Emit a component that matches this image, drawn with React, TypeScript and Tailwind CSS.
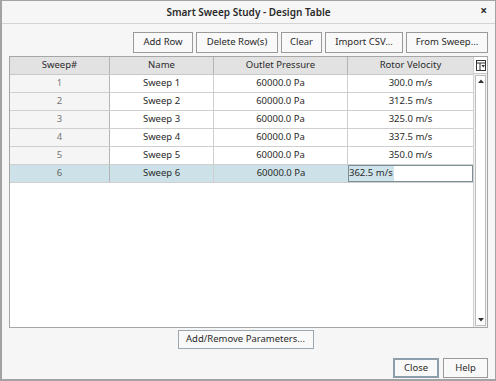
const rows = [
  { id: 1, name: "Sweep 1", p: "60000.0 Pa", v: "300.0 m/s" },
  { id: 2, name: "Sweep 2", p: "60000.0 Pa", v: "312.5 m/s" },
  { id: 3, name: "Sweep 3", p: "60000.0 Pa", v: "325.0 m/s" },
  { id: 4, name: "Sweep 4", p: "60000.0 Pa", v: "337.5 m/s" },
  { id: 5, name: "Sweep 5", p: "60000.0 Pa", v: "350.0 m/s" },
];

function Btn({ label, w }: { label: string; w: string }) {
  return (
    <button className={`${w} h-[21px] border border-[#9a9a9a] bg-[#f9f9f9] text-[9.5px] text-[#2a2a2a] flex items-center justify-center`}>
      {label}
    </button>
  );
}

export default function App() {
  return (
    <div
      className="w-[496px] h-[381px] bg-[#f6f6f6] border-t border-r border-l-2 border-b-2 border-[#a3a3a3] flex flex-col text-[#2a2a2a]"
      style={{ fontFamily: '"Noto Sans", "Open Sans", sans-serif' }}
    >
      {/* title bar */}
      <div className="h-[23px] shrink-0 border-b border-[#d4d4d4] relative flex items-center justify-center">
        <span className="text-[10px] font-semibold">Smart Sweep Study - Design Table</span>
        <span className="absolute right-[8px] top-[4px] text-[12px] font-bold leading-none">×</span>
      </div>

      {/* toolbar */}
      <div className="flex justify-end gap-[3px] pr-[7px] pt-[8px] h-[32px] shrink-0">
        <Btn label="Add Row" w="w-[60px]" />
        <Btn label="Delete Row(s)" w="w-[82px]" />
        <Btn label="Clear" w="w-[41px]" />
        <Btn label="Import CSV..." w="w-[78px]" />
        <Btn label="From Sweep..." w="w-[82px]" />
      </div>

      {/* table */}
      <div className="mx-[7px] h-[272px] shrink-0 border border-[#a6a6a6] bg-white flex text-[9.5px]">
        <div className="flex-1 flex flex-col">
          <div className="h-[18px] flex bg-[#e2e2e2] border-b border-[#c8c8c8]">
            <div className="w-[100px] border-r border-[#b4b4b4] flex items-center justify-center">Sweep#</div>
            <div className="w-[104px] border-r border-[#b4b4b4] flex items-center justify-center">Name</div>
            <div className="w-[134px] border-r border-[#b4b4b4] flex items-center justify-center">Outlet Pressure</div>
            <div className="flex-1 flex items-center justify-center">Rotor Velocity</div>
          </div>
          {rows.map((r) => (
            <div key={r.id} className="h-[18px] flex border-b border-[#cfcfcf]">
              <div className="w-[100px] bg-[#f5f5f5] text-[#777] border-r border-[#b4b4b4] flex items-center justify-center">{r.id}</div>
              <div className="w-[104px] border-r border-[#cfcfcf] flex items-center justify-center">{r.name}</div>
              <div className="w-[134px] border-r border-[#cfcfcf] flex items-center justify-center">{r.p}</div>
              <div className="flex-1 flex items-center justify-center">{r.v}</div>
            </div>
          ))}
          <div className="h-[18px] flex border-b border-[#cfcfcf] bg-[#cde2e8]">
            <div className="w-[100px] text-[#666] border-r border-[#b4b4b4] flex items-center justify-center">6</div>
            <div className="w-[104px] border-r border-[#cfcfcf] flex items-center justify-center">Sweep 6</div>
            <div className="w-[134px] flex items-center justify-center">60000.0 Pa</div>
            <div className="flex-1 bg-white border border-[#7f8f9a] flex items-center">
              <span className="bg-[#cfe3ea] pr-[1px]">362.5 m/s</span>
            </div>
          </div>
        </div>
        {/* scrollbar */}
        <div className="w-[14px] flex flex-col border-l border-[#d0d0d0]">
          <div className="h-[17px] flex items-center justify-center bg-white border-b border-[#c8c8c8]">
            <svg width="10" height="11" viewBox="0 0 10 11">
              <rect x="0.5" y="0.5" width="9" height="10" fill="#fff" stroke="#333" />
              <line x1="0.5" y1="3" x2="9.5" y2="3" stroke="#333" />
              <line x1="4" y1="3" x2="4" y2="10.5" stroke="#333" />
              <path d="M5.5 5 L9 5 L7.25 7.5 Z" fill="#333" />
            </svg>
          </div>
          <div className="flex-1 flex flex-col items-center pt-[1px] pb-[1px] bg-[#f2f2f2]">
            <div className="w-[11px] flex-1 border border-[#bdbdbd] bg-white flex flex-col justify-between items-center py-[3px]">
              <svg width="6" height="4" viewBox="0 0 6 4"><path d="M0 4 L3 0.5 L6 4 Z" fill="#333" /></svg>
              <svg width="6" height="4" viewBox="0 0 6 4"><path d="M0 0 L3 3.5 L6 0 Z" fill="#333" /></svg>
            </div>
          </div>
        </div>
      </div>

      {/* parameters button */}
      <div className="flex justify-center pt-[2px] pr-[6px]">
        <button className="w-[136px] h-[19px] border border-[#9aa6b0] bg-[#f9f9f9] text-[9.5px] flex items-center justify-center">
          Add/Remove Parameters...
        </button>
      </div>

      {/* footer */}
      <div className="flex-1 flex items-end justify-end gap-[4px] pr-[7px] pb-[1px]">
        <button className="w-[46px] h-[20px] border-2 border-[#8c9eac] bg-[#f9f9f9] text-[9.5px] flex items-center justify-center">Close</button>
        <button className="w-[45px] h-[20px] border border-[#9a9a9a] bg-[#f9f9f9] text-[9.5px] flex items-center justify-center">Help</button>
      </div>
    </div>
  );
}
